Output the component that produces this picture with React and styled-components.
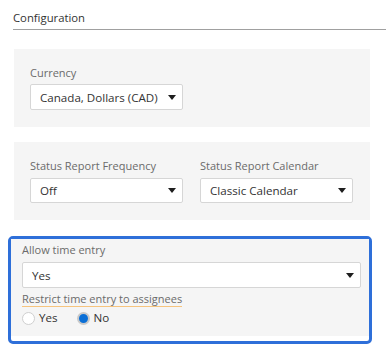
import React from "react";
import styled, { createGlobalStyle } from "styled-components";

const Global = createGlobalStyle`
  html, body { margin: 0; padding: 0; background: #fff; }
  body { font-family: "Open Sans", "Noto Sans", sans-serif; color: #333; }
  * { box-sizing: border-box; }
`;

const Page = styled.div`
  width: 386px;
  height: 345px;
  overflow: hidden;
`;

const Header = styled.div`
  margin-left: 13px;
  padding: 10px 0 3px 0;
  font-size: 11.3px;
  line-height: 16px;
  color: #333;
  border-bottom: 1px solid #a0a0a0;
`;

const Content = styled.div`
  display: flex;
  flex-direction: column;
  padding-left: 14px;
  width: 370px;
`;

const Panel = styled.div`
  background: #f5f5f5;
  margin-top: ${(p) => p.$top}px;
  padding: 16px 16px 17px 16px;
  display: flex;
  gap: 17px;
`;

const Field = styled.div`
  display: flex;
  flex-direction: column;
  gap: ${(p) => p.$gap ?? 3}px;
  width: ${(p) => (p.$w ? p.$w + "px" : "auto")};
`;

const Label = styled.div`
  font-size: 11px;
  line-height: 16px;
  color: #6b6b6b;
  white-space: nowrap;
`;

const Select = styled.div`
  height: ${(p) => p.$h ?? 26}px;
  width: ${(p) => (p.$w ? p.$w + "px" : "100%")};
  background: #fff;
  border: 1px solid #d6d6d6;
  border-radius: 2px;
  display: flex;
  align-items: center;
  justify-content: space-between;
  padding: 0 6px 0 9px;
  font-size: 11.6px;
  color: #333;
  white-space: nowrap;
`;

const Caret = () => (
  <svg width="8" height="5" viewBox="0 0 8 5">
    <path d="M0 0 H8 L4 5 Z" fill="#1e1e1e" />
  </svg>
);

const Focus = styled.div`
  margin: 16px 14px 0 8px;
  border: 3px solid #2e6fd9;
  border-radius: 5px;
  padding-bottom: 5px;
  background: #fff;
`;

const InnerPanel = styled.div`
  background: #f5f5f5;
  padding: 3px 4px 9px 11px;
  display: flex;
  flex-direction: column;
`;

const Underlined = styled(Label)`
  align-self: flex-start;
  margin-top: 3px;
  border-bottom: 1px solid #f6c47e;
  line-height: 15px;
`;

const RadioRow = styled.div`
  display: flex;
  align-items: center;
  margin-top: 2px;
`;

const RadioItem = styled.label`
  display: flex;
  align-items: center;
  gap: 4px;
  font-size: 11.6px;
  line-height: 18px;
  color: #333;
  margin-right: ${(p) => p.$mr ?? 0}px;
`;

const Dot = styled.span`
  width: 13px;
  height: 13px;
  border-radius: 50%;
  background: ${(p) => (p.$on ? "#0b6fd6" : "#fff")};
  border: ${(p) => (p.$on ? "2px solid #c9c9c9" : "1px solid #cfcfcf")};
`;

export default function App() {
  return (
    <Page>
      <Global />
      <Header>Configuration</Header>
      <Content>
        <Panel $top={19}>
          <Field>
            <Label>Currency</Label>
            <Select $w={153}>
              Canada, Dollars (CAD)
              <Caret />
            </Select>
          </Field>
        </Panel>
        <Panel $top={15}>
          <Field $gap={4}>
            <Label>Status Report Frequency</Label>
            <Select $w={153} $h={25}>
              Off
              <Caret />
            </Select>
          </Field>
          <Field $gap={4}>
            <Label>Status Report Calendar</Label>
            <Select $w={153} $h={25}>
              Classic Calendar
              <Caret />
            </Select>
          </Field>
        </Panel>
      </Content>
      <Focus>
        <InnerPanel>
          <Field $gap={4}>
            <Label>Allow time entry</Label>
            <Select $w={339}>
              Yes
              <Caret />
            </Select>
          </Field>
          <Underlined>Restrict time entry to assignees</Underlined>
          <RadioRow>
            <RadioItem $mr={19}>
              <Dot />
              Yes
            </RadioItem>
            <RadioItem>
              <Dot $on />
              No
            </RadioItem>
          </RadioRow>
        </InnerPanel>
      </Focus>
    </Page>
  );
}
